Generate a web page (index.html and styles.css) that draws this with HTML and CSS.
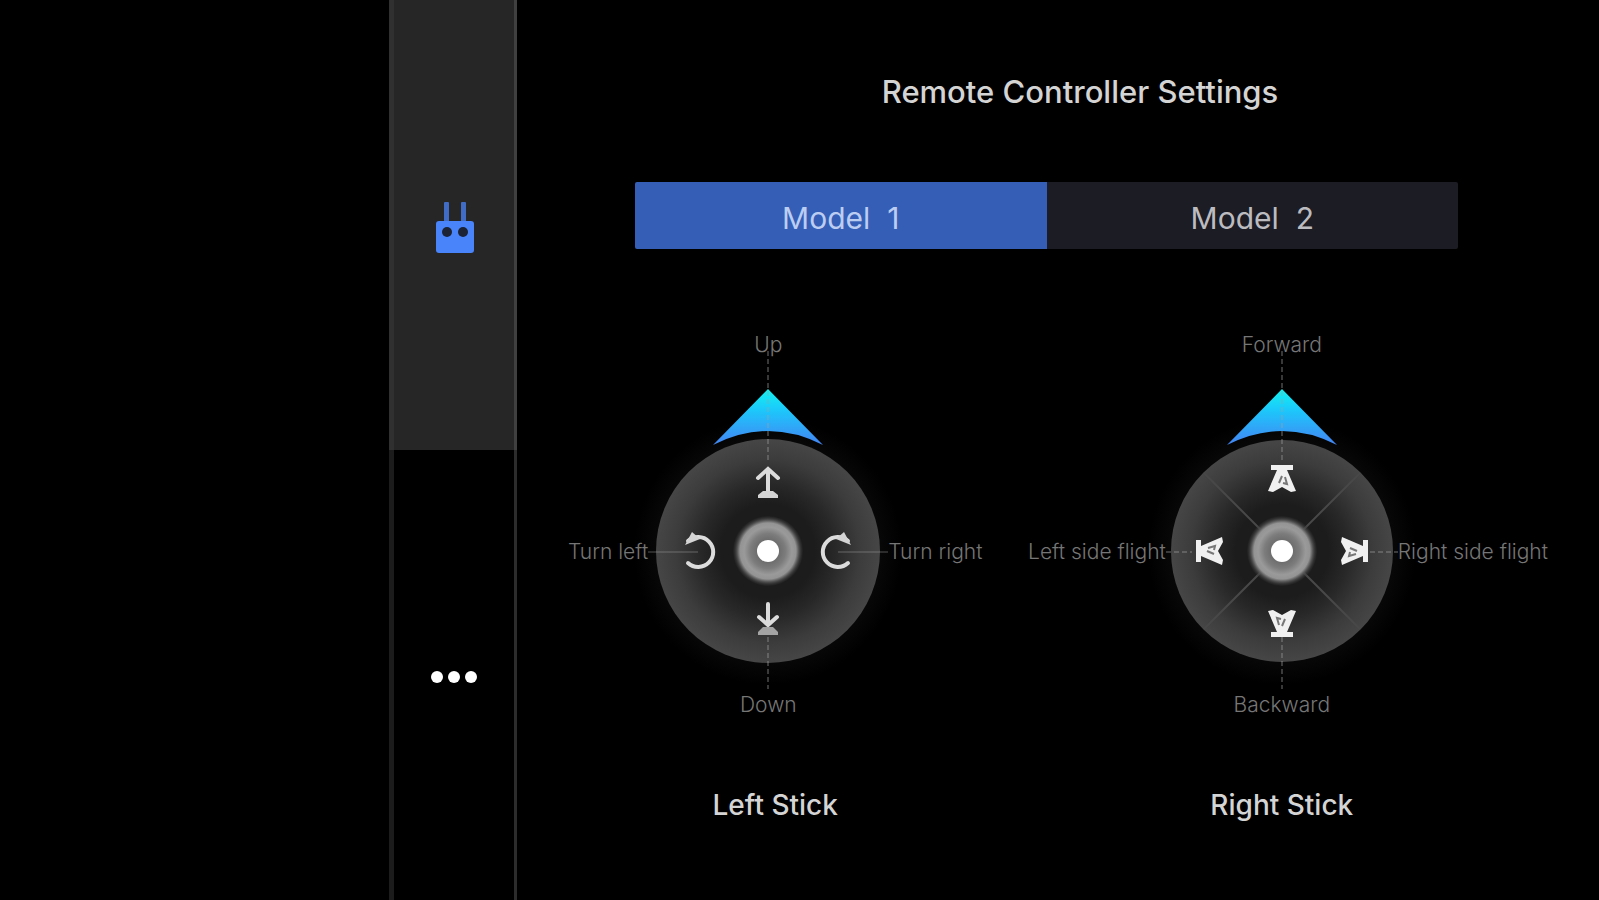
FILE: index.html
```html
<!DOCTYPE html>
<html lang="en">
<head>
    <meta charset="UTF-8">
    <meta name="viewport" content="width=device-width, initial-scale=1.0">
    <title>Remote Controller Settings</title>
    <link rel="stylesheet" href="styles.css">
</head>
<body>

    <!-- Camera view, empty while settings are open -->
    <div class="preview"></div>

    <nav class="sidebar">
        <button type="button" class="side-btn active" aria-label="Remote controller">
            <svg width="40" height="52" viewBox="0 0 40 52">
                <g fill="#4a84fb">
                    <rect x="10" y="1" width="5" height="20" rx="1" opacity="0.75"/>
                    <rect x="27" y="1" width="5" height="20" rx="1" opacity="0.75"/>
                    <rect x="2" y="20" width="38" height="32" rx="3"/>
                </g>
                <circle cx="13" cy="31" r="5" fill="#1b2334"/>
                <circle cx="29" cy="31" r="5" fill="#1b2334"/>
            </svg>
        </button>
        <button type="button" class="side-btn" aria-label="More">
            <svg width="48" height="12" viewBox="0 0 48 12" fill="#fff">
                <circle cx="7" cy="6" r="6"/>
                <circle cx="24" cy="6" r="6"/>
                <circle cx="41" cy="6" r="6"/>
            </svg>
        </button>
    </nav>

    <main class="settings">
        <h1>Remote Controller Settings</h1>

        <div class="models">
            <button type="button" class="model selected">Model&nbsp; 1</button>
            <button type="button" class="model">Model&nbsp; 2</button>
        </div>

        <div class="sticks">
            <section class="stick stick-left">
                <span class="label top">Up</span>
                <span class="label left">Turn left</span>
                <svg class="dial" width="224" height="336" viewBox="0 0 224 336">
                    <defs>
                        <radialGradient id="disc">
                            <stop offset="0.42" stop-color="#1c1c1c"/>
                            <stop offset="0.6" stop-color="#282828"/>
                            <stop offset="0.82" stop-color="#3c3c3c"/>
                            <stop offset="1" stop-color="#464646"/>
                        </radialGradient>
                        <radialGradient id="knob">
                            <stop offset="0.3" stop-color="#6c6c6c"/>
                            <stop offset="0.5" stop-color="#7c7c7c"/>
                            <stop offset="0.68" stop-color="#9a9a9a"/>
                            <stop offset="0.8" stop-color="#949494"/>
                            <stop offset="0.87" stop-color="#5c5c5c"/>
                            <stop offset="1" stop-color="#303030" stop-opacity="0.2"/>
                        </radialGradient>
                        <radialGradient id="glow">
                            <stop offset="0.84" stop-color="#070707"/>
                            <stop offset="1" stop-color="#000"/>
                        </radialGradient>
                        <linearGradient id="pointer" x1="0" y1="0" x2="0" y2="1">
                            <stop offset="0" stop-color="#12f2ee"/>
                            <stop offset="0.35" stop-color="#1bcbfb"/>
                            <stop offset="1" stop-color="#4384f4"/>
                        </linearGradient>
                        <!-- Bar and arrow, drawn pointing up from the knob -->
                        <g id="move">
                            <path d="M-11-86H11V-81H5L14-60L9-59L0-64L-9-59L-14-60L-5-81H-11Z" fill="#f0f0f0"/>
                            <path d="M0-75L-3-68M3-74L5-67L1-68" stroke="#777" stroke-width="2" fill="none"/>
                        </g>
                    </defs>
                    <circle cx="112" cy="194" r="134" fill="url(#glow)"/>
                    <path d="M112 32L167 88Q112 60 57 88Z" fill="url(#pointer)"/>
                    <circle cx="112" cy="194" r="112" fill="url(#disc)"/>
                    <path class="guide" d="M112-6V106M112 280V332"/>
                    <path class="guide solid" d="M-8 195H42M182 195H232"/>
                    <circle cx="112" cy="194" r="35" fill="url(#knob)"/>
                    <circle cx="112" cy="194" r="11" fill="#fff"/>
                    <g class="arrow">
                        <path d="M112 112V137M102 121L112 112L122 121"/>
                        <path class="base" d="M107 134H117L122 138V141H102V138Z"/>
                        <path d="M112 247V268M103 260L112 268L121 260"/>
                        <path class="base dim" d="M107 270H117L122 275V278H102V275Z"/>
                        <path d="M32 184A15 15 0 1 1 32 206"/>
                        <path class="base" d="M29 188L36 175L44 182L34 186Z"/>
                        <path d="M192 184A15 15 0 1 0 192 206"/>
                        <path class="base" d="M195 188L188 175L180 182L190 186Z"/>
                    </g>
                </svg>
                <span class="label right">Turn right</span>
                <span class="label bottom">Down</span>
                <h2>Left Stick</h2>
            </section>

            <section class="stick stick-right">
                <span class="label top">Forward</span>
                <span class="label left">Left side flight</span>
                <svg class="dial" width="224" height="336" viewBox="0 0 224 336">
                    <circle cx="112" cy="194" r="134" fill="url(#glow)"/>
                    <path d="M112 32L167 88Q112 60 57 88Z" fill="url(#pointer)"/>
                    <circle cx="112" cy="194" r="111" fill="url(#disc)"/>
                    <path class="spoke" d="M34 116L190 272M190 116L34 272"/>
                    <path class="guide" d="M112-6V106M112 280V332M-4 195H22M200 195H228"/>
                    <circle cx="112" cy="194" r="35" fill="url(#knob)"/>
                    <circle cx="112" cy="194" r="11" fill="#fff"/>
                    <use href="#move" transform="translate(112 194)"/>
                    <use href="#move" transform="translate(112 194) rotate(90)"/>
                    <use href="#move" transform="translate(112 194) rotate(180)"/>
                    <use href="#move" transform="translate(112 194) rotate(270)"/>
                </svg>
                <span class="label right">Right side flight</span>
                <span class="label bottom">Backward</span>
                <h2>Right Stick</h2>
            </section>
        </div>
    </main>

</body>
</html>
```

FILE: styles.css
```css
/* General Styles */
body {
    margin: 0;
    min-height: 100vh;
    display: grid;
    grid-template-columns: 389fr 128px 1082fr;
    background-color: #000;
    color: #ddd;
    font-family: Inter, "Liberation Sans", sans-serif;
}

button {
    border: none;
    padding: 4px 0 0;
    font-family: inherit;
    cursor: pointer;
}

/* Sidebar */
.sidebar {
    display: flex;
    flex-direction: column;
}

.side-btn {
    flex: 1;
    display: flex;
    justify-content: center;
    align-items: center;
    background-color: #000;
    border-left: 5px solid #1c1c1c;
    border-right: 3px solid #2c2c2c;
}

.side-btn.active {
    background-color: #262626;
    border-left-color: #303030;
    border-right-color: #404040;
}

/* Settings panel */
.settings {
    min-width: 0;
}

h1 {
    margin: 72px 0 70px;
    padding-left: 44px;
    text-align: center;
    font-size: 31px;
    line-height: 40px;
    font-weight: 500;
    color: #d4d4d4;
}

.models {
    display: flex;
    margin: 0 141px 84px 118px;
    border-radius: 2px;
    overflow: hidden;
}

.model {
    flex: 1;
    height: 67px;
    font-size: 30px;
    background-color: #1c1c24;
    color: #bcbcc0;
}

.model.selected {
    background-color: #355eb6;
    color: #bccdf2;
}

/* Sticks */
.sticks {
    display: flex;
    justify-content: space-between;
    padding: 0 51px;
}

.stick {
    display: grid;
    grid-template-columns: max-content 224px max-content;
    grid-template-rows: 24px 336px 24px auto;
    column-gap: 8px;
}

.stick-right {
    column-gap: 4px;
}

.dial {
    grid-column: 2;
    grid-row: 2;
    overflow: visible;
}

/* Keep the labels above the glow round the dial */
.label {
    position: relative;
    z-index: 1;
    font-size: 21px;
    line-height: 24px;
    font-weight: 300;
    color: #767676;
    text-align: center;
}

.top {
    grid-column: 2;
    grid-row: 1;
}

/* Side labels sit level with the knob */
.left,
.right {
    grid-row: 2;
    padding-top: 183px;
}

.left {
    grid-column: 1;
}

.right {
    grid-column: 3;
}

.bottom {
    grid-column: 2;
    grid-row: 3;
}

h2 {
    grid-column: 1 / -1;
    margin: 72px 0 0;
    text-align: center;
    font-size: 28px;
    line-height: 32px;
    font-weight: 500;
    color: #d4d4d4;
}

.stick-right h2 {
    grid-column: 2;
}

/* Dial drawing */
.guide {
    stroke: #a0a0a0;
    stroke-opacity: 0.35;
    stroke-width: 2;
    stroke-dasharray: 5 3;
    fill: none;
}

.guide.solid {
    stroke-dasharray: none;
    stroke-opacity: 0.25;
}

.spoke {
    stroke: #484848;
    stroke-width: 2;
}

.arrow {
    fill: none;
    stroke: #dcdcdc;
    stroke-width: 4;
    stroke-linecap: round;
}

.arrow .base {
    fill: #d4d4d4;
    stroke: none;
}

.arrow .dim {
    fill: #a4a4a4;
}
```
